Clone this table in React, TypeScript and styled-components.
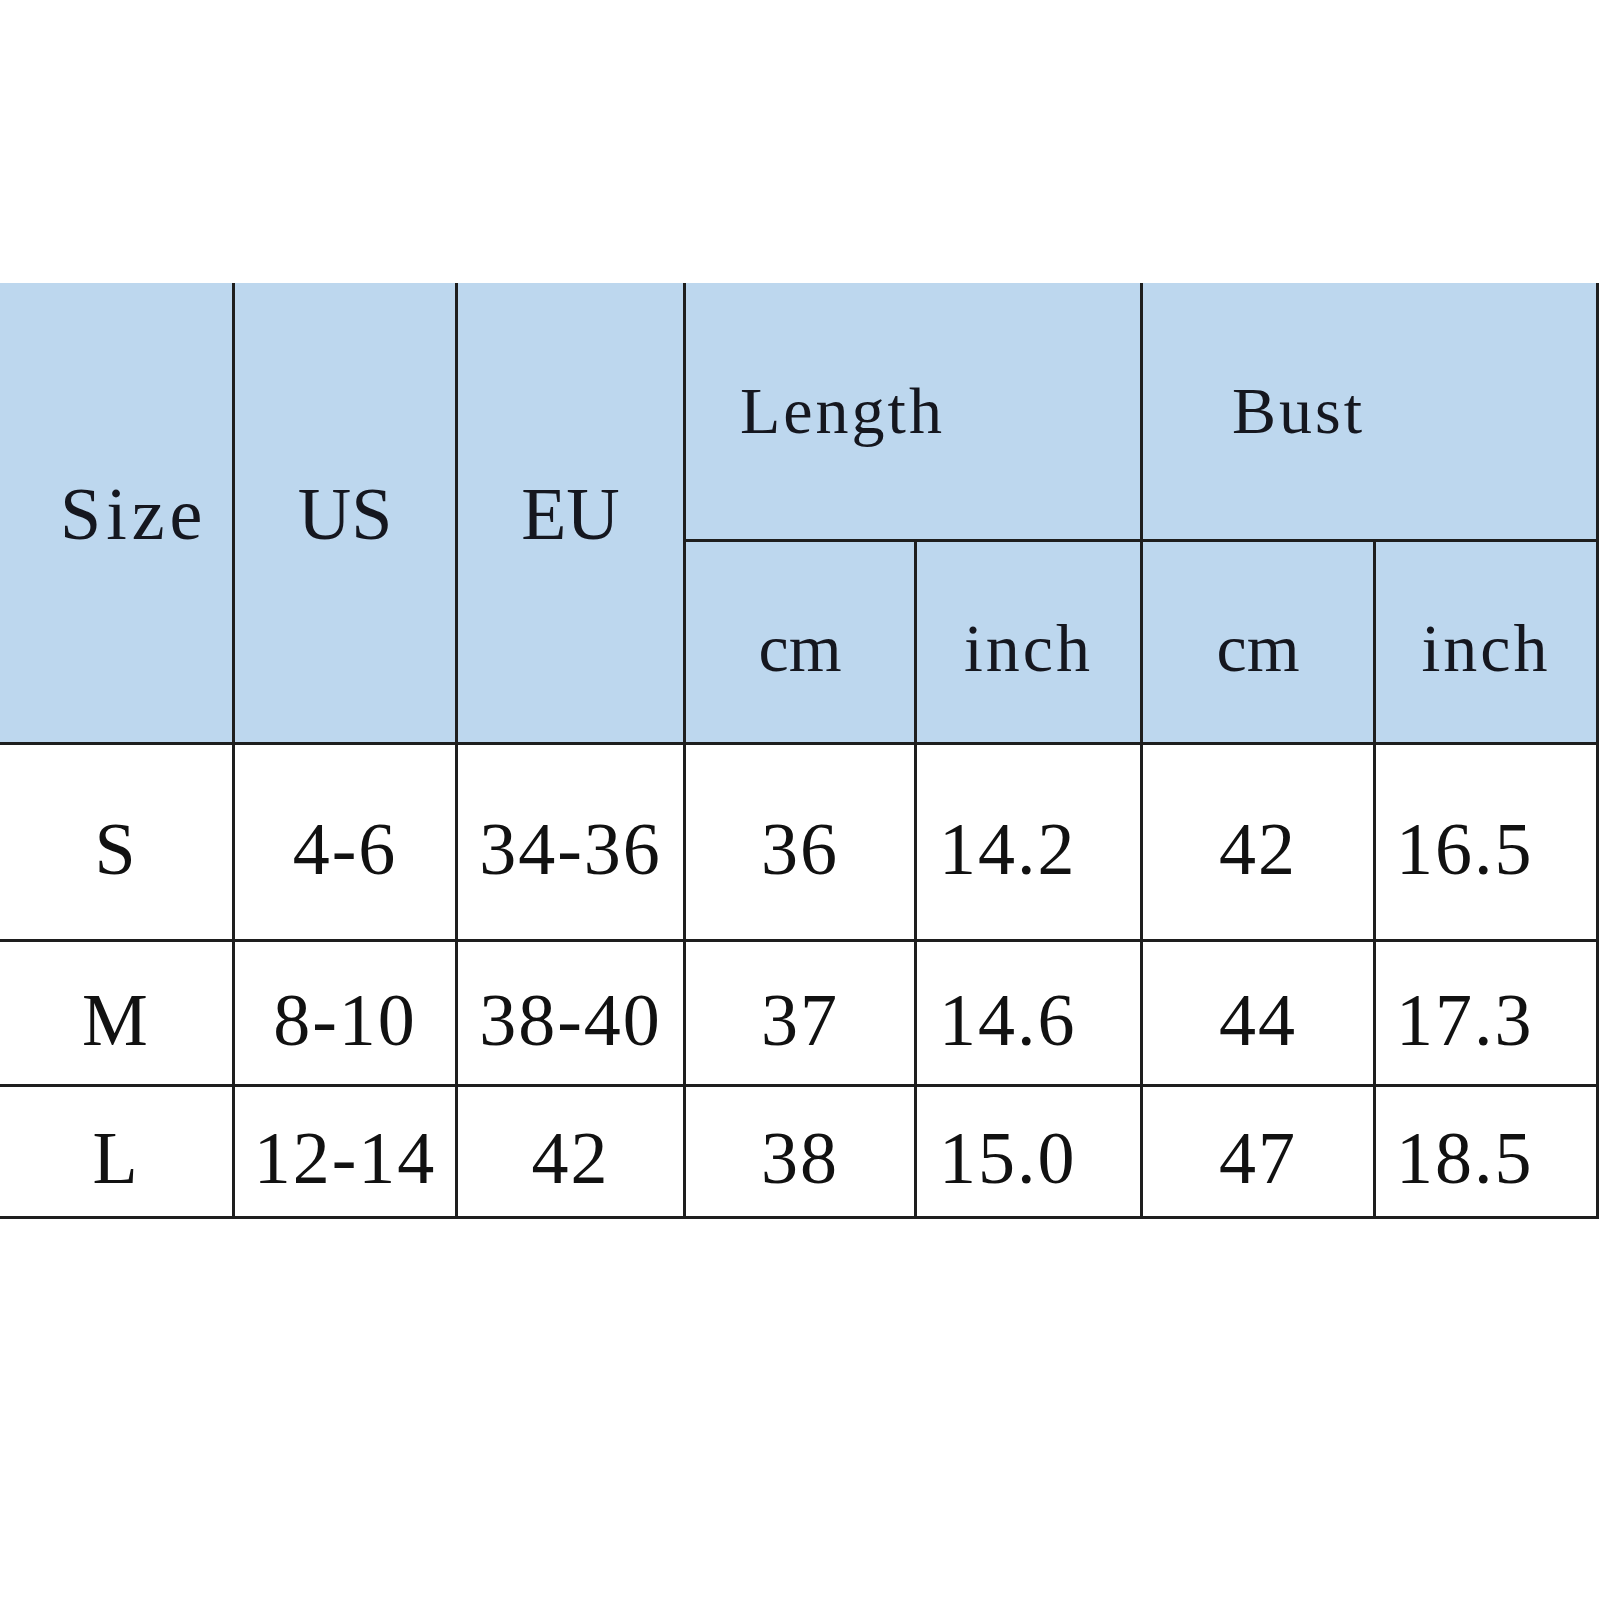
import React from "react";
import styled, { createGlobalStyle } from "styled-components";

const GlobalStyle = createGlobalStyle`
	html, body {
		margin: 0;
		padding: 0;
		background: #ffffff;
	}
	body {
		font-family: "Liberation Serif", "Times New Roman", serif;
		color: #111;
	}
`;

type Row = {
	size: string;
	us: string;
	eu: string;
	lengthCm: string;
	lengthInch: string;
	bustCm: string;
	bustInch: string;
};

const rows: Row[] = [
	{ size: "S", us: "4-6", eu: "34-36", lengthCm: "36", lengthInch: "14.2", bustCm: "42", bustInch: "16.5" },
	{ size: "M", us: "8-10", eu: "38-40", lengthCm: "37", lengthInch: "14.6", bustCm: "44", bustInch: "17.3" },
	{ size: "L", us: "12-14", eu: "42", lengthCm: "38", lengthInch: "15.0", bustCm: "47", bustInch: "18.5" },
];

const SizeChart = () => {
	return (
		<Page>
			<GlobalStyle />
			<Table>
				<Cell $head $rowSpan={2} $align="left" $pad={60} $shift={4}>
					<Label $size={74} $spacing={5}>Size</Label>
				</Cell>
				<Cell $head $rowSpan={2} $shift={4}>
					<Label $size={74} $spacing={0}>US</Label>
				</Cell>
				<Cell $head $rowSpan={2} $shift={4}>
					<Label $size={74} $spacing={0}>EU</Label>
				</Cell>
				<Cell $head $colSpan={2} $align="left" $pad={54}>
					<Label $size={66}>Length</Label>
				</Cell>
				<Cell $head $colSpan={2} $align="left" $pad={89}>
					<Label $size={66}>Bust</Label>
				</Cell>
				<Cell $head $shift={12}>
					<Label $size={68} $spacing={0}>cm</Label>
				</Cell>
				<Cell $head $shift={12}>
					<Label $size={68}>inch</Label>
				</Cell>
				<Cell $head $shift={12}>
					<Label $size={68} $spacing={0}>cm</Label>
				</Cell>
				<Cell $head $shift={12}>
					<Label $size={68}>inch</Label>
				</Cell>

				{rows.map((row) => (
					<React.Fragment key={row.size}>
						<Cell $shift={14}><Value>{row.size}</Value></Cell>
						<Cell $shift={14}><Value>{row.us}</Value></Cell>
						<Cell $shift={14}><Value>{row.eu}</Value></Cell>
						<Cell $shift={14}><Value>{row.lengthCm}</Value></Cell>
						<Cell $shift={14} $align="left" $pad={22}><Value>{row.lengthInch}</Value></Cell>
						<Cell $shift={14}><Value>{row.bustCm}</Value></Cell>
						<Cell $shift={14} $align="left" $pad={20}><Value>{row.bustInch}</Value></Cell>
					</React.Fragment>
				))}
			</Table>
		</Page>
	);
};

const Page = styled.div`
	width: 1600px;
	height: 1600px;
	padding-top: 283px;
	box-sizing: border-box;
	background: #ffffff;
`;

const Table = styled.div`
	display: grid;
	grid-template-columns: 232px 220px 225px 228px 223px 230px 220px;
	grid-template-rows: 256px 200px 194px 142px 129px;
	gap: 3px;
	padding: 0 3px 3px 0;
	width: max-content;
	background: #1e1e1e;
`;

const Cell = styled.div<{
	$head?: boolean;
	$rowSpan?: number;
	$colSpan?: number;
	$align?: "center" | "left";
	$pad?: number;
	$shift?: number;
}>`
	display: flex;
	align-items: center;
	justify-content: ${(p) => (p.$align === "left" ? "flex-start" : "center")};
	padding-left: ${(p) => p.$pad ?? 0}px;
	padding-top: ${(p) => p.$shift ?? 0}px;
	box-sizing: border-box;
	background: ${(p) => (p.$head ? "#bdd7ee" : "#ffffff")};
	grid-row: span ${(p) => p.$rowSpan ?? 1};
	grid-column: span ${(p) => p.$colSpan ?? 1};
	overflow: hidden;
`;

const Label = styled.span<{ $size: number; $spacing?: number }>`
	font-family: "Liberation Serif", "Times New Roman", serif;
	font-size: ${(p) => p.$size}px;
	letter-spacing: ${(p) => p.$spacing ?? 3}px;
	color: #15171f;
	white-space: nowrap;
`;

const Value = styled.span`
	font-family: "Liberation Serif", "Times New Roman", serif;
	font-size: 74px;
	letter-spacing: 2px;
	color: #111;
	white-space: nowrap;
`;

export default SizeChart;
